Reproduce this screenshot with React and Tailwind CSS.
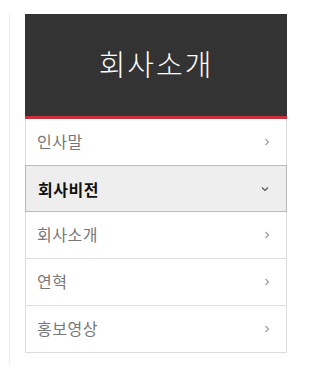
import React from 'react';

const items = [
  { label: '인사말' },
  { label: '회사비전', active: true },
  { label: '회사소개' },
  { label: '연혁' },
  { label: '홍보영상' },
];

const Chevron = ({ down }) =>
  down ? (
    <svg width="8" height="6" viewBox="0 0 8 6" className="mt-[1px]">
      <path d="M1 1.5 L4 4.5 L7 1.5" fill="none" stroke="#555" strokeWidth="1.2" />
    </svg>
  ) : (
    <svg width="6" height="8" viewBox="0 0 6 8">
      <path d="M1.5 1 L4.5 4 L1.5 7" fill="none" stroke="#999" strokeWidth="1.1" />
    </svg>
  );

export default function App() {
  return (
    <div
      className="w-[313px] h-[365px] bg-white overflow-hidden"
      style={{ fontFamily: '"Noto Sans CJK KR", "Noto Sans", sans-serif' }}
    >
      <div className="ml-[9px] mt-[14px] h-[351px] border-l border-[#ececec] pl-[15px]">
        <div className="w-[262px]">
          <div className="h-[102px] bg-[#333333] flex items-center justify-center">
            <span className="text-[29px] text-white leading-none tracking-[2px] pb-[4px] font-light">회사소개</span>
          </div>
          <div className="h-[3px] bg-[#c9303e]" />
          <ul className="border-x border-b border-[#dddddd]">
            {items.map((it, i) => (
              <li
                key={i}
                className={
                  it.active
                    ? 'h-[47px] -mx-px px-[12px] flex items-center justify-between bg-[#eeeeee] border-y border-x border-[#bbbbbb] -mt-px'
                    : 'h-[47px] px-[11px] flex items-center justify-between border-b border-[#dddddd] last:border-b-0 last:h-[46px]'
                }
              >
                <span
                  className={
                    it.active
                      ? 'text-[16px] font-bold text-[#111] tracking-[0.5px]'
                      : 'text-[16px] text-[#777] tracking-[0.5px] pb-[2px]'
                  }
                >
                  {it.label}
                </span>
                <span className="pr-[5px] flex items-center">
                  <Chevron down={it.active} />
                </span>
              </li>
            ))}
          </ul>
        </div>
      </div>
    </div>
  );
}
